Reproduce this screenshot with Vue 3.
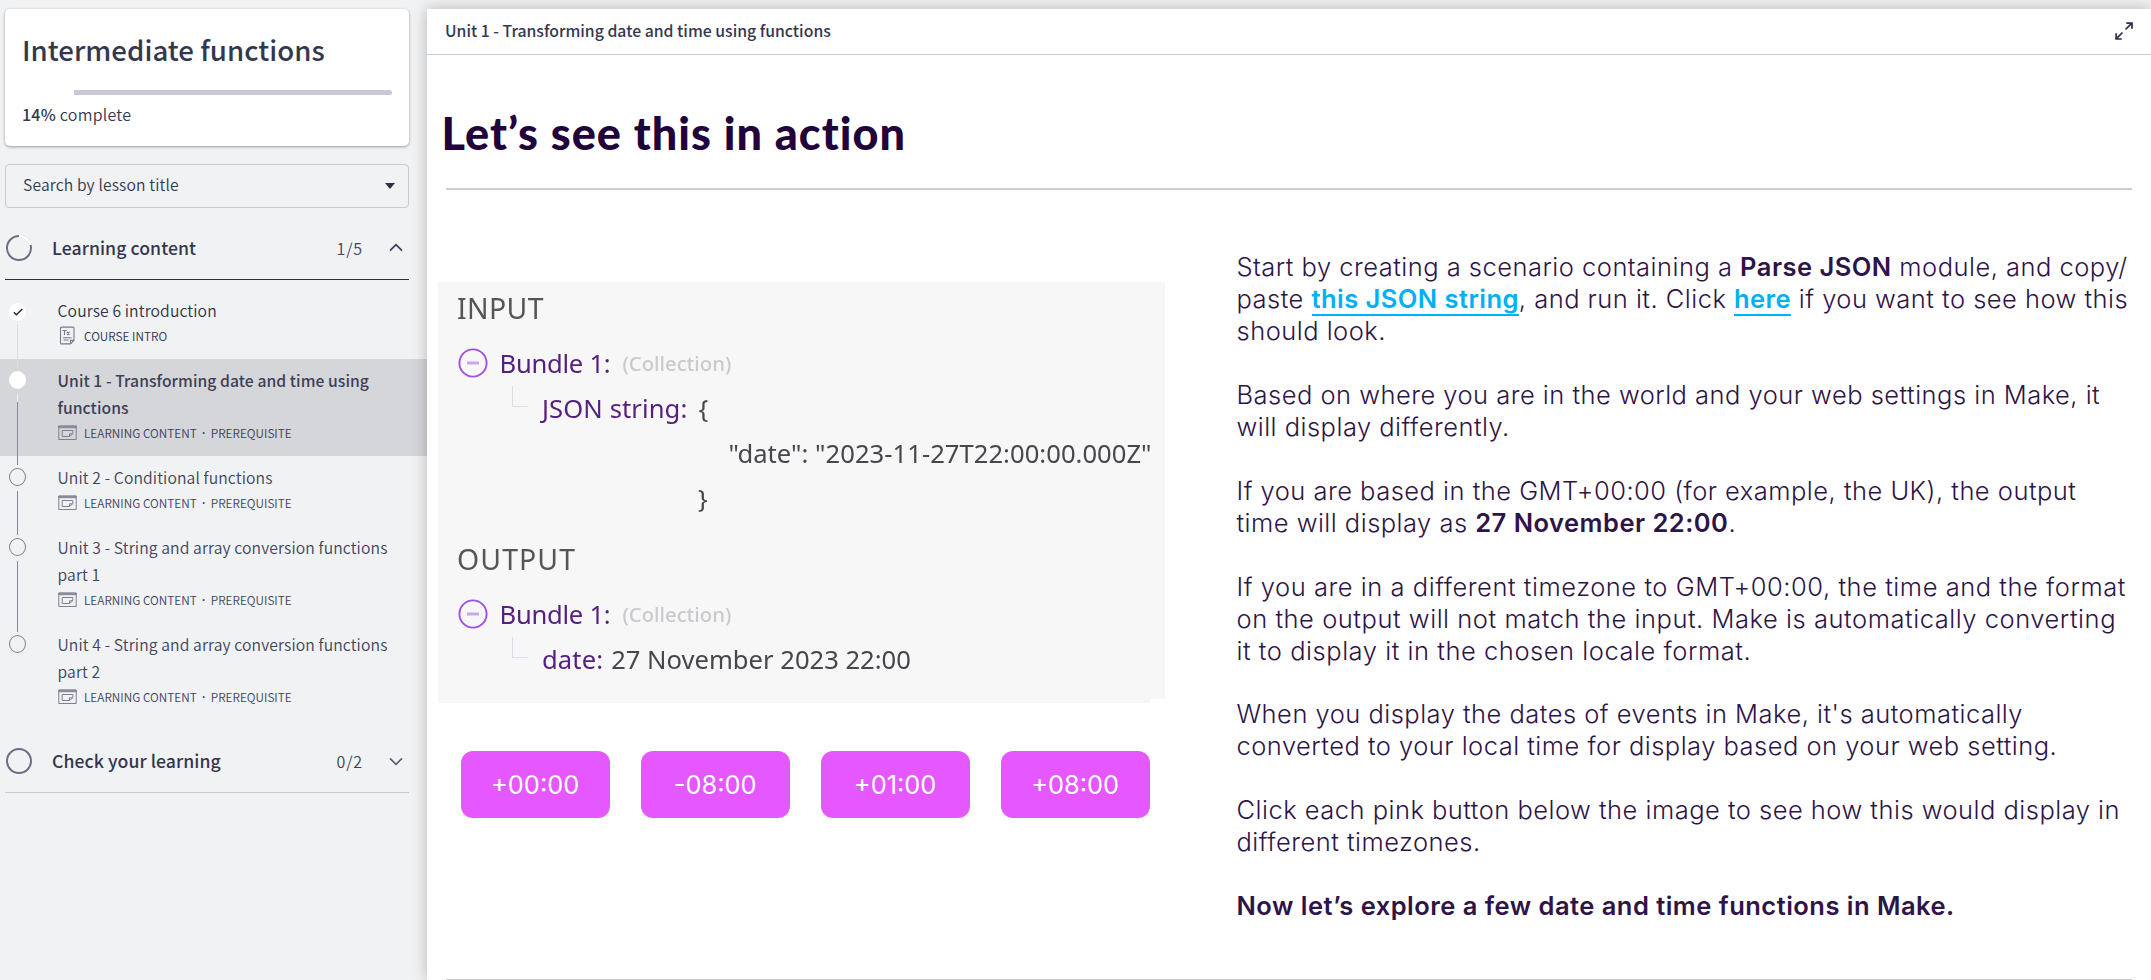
<script setup>
const lessons = [
  { lines: ['Course 6 introduction'], meta: ['COURSE INTRO'], state: 'done', icon: 'text' },
  { lines: ['Unit 1 - Transforming date and time using', 'functions'], meta: ['LEARNING CONTENT', 'PREREQUISITE'], state: 'current', icon: 'slide' },
  { lines: ['Unit 2 - Conditional functions'], meta: ['LEARNING CONTENT', 'PREREQUISITE'], state: 'open', icon: 'slide' },
  { lines: ['Unit 3 - String and array conversion functions', 'part 1'], meta: ['LEARNING CONTENT', 'PREREQUISITE'], state: 'open', icon: 'slide' },
  { lines: ['Unit 4 - String and array conversion functions', 'part 2'], meta: ['LEARNING CONTENT', 'PREREQUISITE'], state: 'open last', icon: 'slide' },
]
const offsets = ['+00:00', '-08:00', '+01:00', '+08:00']
</script>

<template>
  <div class="page">
    <aside class="sidebar">
      <section class="card">
        <h1>Intermediate functions</h1>
        <div class="progress"><div class="remaining"></div></div>
        <p class="percent"><b>14%</b> complete</p>
      </section>

      <div class="search">
        <span>Search by lesson title</span>
        <svg width="10" height="6" viewBox="0 0 10 6"><path d="M0 0h10L5 6z" fill="#2d3047" /></svg>
      </div>

      <div class="group dark">
        <svg class="ring" width="28" height="28" viewBox="0 0 28 28">
          <circle cx="14" cy="14" r="12" fill="none" stroke="#6b6e82" stroke-width="2" />
          <path d="M14 2A12 12 0 0 1 25.6 11" fill="none" stroke="#fff" stroke-width="2.4" />
        </svg>
        <span class="name">Learning content</span>
        <span class="count">1/5</span>
        <svg class="chev" width="14" height="9" viewBox="0 0 14 9"><path d="M1 7.7L7 1.6l6 6.100" fill="none" stroke="#3a3d54" stroke-width="1.7" /></svg>
      </div>

      <ul class="lessons">
        <li v-for="l in lessons" :key="l.lines[0]" :class="l.state">
          <div class="rail">
            <span class="dot">
              <svg v-if="l.state === 'done'" width="10" height="8" viewBox="0 0 10 8"><path d="M.8 4.200L3.400 6.700L9.300.9" fill="none" stroke="#22243a" stroke-width="1.4" /></svg>
            </span>
            <span class="line"></span>
          </div>
          <div class="info">
            <div v-for="t in l.lines" :key="t" class="title">{{ t }}</div>
            <div class="meta">
              <svg v-if="l.icon === 'text'" width="19" height="19" viewBox="0 0 19 19" fill="none" stroke="#777a8c" stroke-width="1.100">
                <path d="M12.500 17.900H3.500a1 1 0 0 1-1-1V2.100a1 1 0 0 1 1-1H15a1 1 0 0 1 1 1v12.300zM12.500 17.700v-3.300H16" />
                <path d="M4.500 4.500h4M6.500 4.500v4.500M9 5.800l2.500 3.200M11.500 5.800L9 9M5 11.700h8.500M5.500 14h5" />
              </svg>
              <svg v-else width="19" height="16" viewBox="0 0 19 16" fill="none" stroke="#7d8091">
                <path d="M.8 1.100h17.400v1.600H.8z" fill="#b9bbc5" />
                <path d="M.8 1.100h17.400v13.400H.8z" />
                <path d="M11.500 11.500H4.200V5.500h10.600v3.200zM11.500 11.500V8.800h3.200" />
              </svg>
              <span>{{ l.meta[0] }}</span>
              <template v-if="l.meta[1]"><span class="sep">·</span><span>{{ l.meta[1] }}</span></template>
            </div>
          </div>
        </li>
      </ul>

      <div class="group second">
        <svg class="ring" width="28" height="28" viewBox="0 0 28 28">
          <circle cx="14" cy="14" r="12" fill="none" stroke="#6b6e82" stroke-width="2" />
        </svg>
        <span class="name">Check your learning</span>
        <span class="count">0/2</span>
        <svg class="chev" width="14" height="9" viewBox="0 0 14 9"><path d="M1 1.300L7 7.400l6-6.100" fill="none" stroke="#5d6076" stroke-width="1.7" /></svg>
      </div>
    </aside>

    <main class="main">
      <header class="bar">
        <span>Unit 1 - Transforming date and time using functions</span>
        <svg width="18" height="18" viewBox="0 0 18 18" fill="none" stroke="#2d3047" stroke-width="1.700">
          <path d="M10.500 7.500L16.800 1.200M11.300 1.100H17V6.800M7.500 10.500L1.200 16.800M1.100 11.300V17H6.800" />
        </svg>
      </header>

      <h2>Let’s see this in action</h2>
      <hr />

      <div class="columns">
        <section class="demo">
          <div class="panel">
            <div class="soft">
              <div class="label">INPUT</div>
              <div class="row">
                <svg class="minus" width="30" height="30" viewBox="0 0 30 30" fill="none"><circle cx="15" cy="15" r="13.600" stroke="#a24fe6" stroke-width="1.900" /><path d="M9 15h12" stroke="#cba6ec" stroke-width="3" /></svg>
                <span class="key bundle">Bundle 1:</span><span class="type">(Collection)</span>
              </div>
              <div class="row child"><i class="elbow"></i><span class="key">JSON string:</span><span class="brace">{</span></div>
              <div class="row value">"date": "2023-11-27T22:00:00.000Z"</div>
              <div class="row close">}</div>
              <div class="label output">OUTPUT</div>
              <div class="row">
                <svg class="minus" width="30" height="30" viewBox="0 0 30 30" fill="none"><circle cx="15" cy="15" r="13.600" stroke="#a24fe6" stroke-width="1.900" /><path d="M9 15h12" stroke="#cba6ec" stroke-width="3" /></svg>
                <span class="key bundle">Bundle 1:</span><span class="type">(Collection)</span>
              </div>
              <div class="row child"><i class="elbow"></i><span class="key">date:</span><span class="date">27 November 2023 22:00</span></div>
            </div>
          </div>
          <div class="buttons">
            <button v-for="o in offsets" :key="o">{{ o }}</button>
          </div>
        </section>

        <section class="copy">
          <p>Start by creating a scenario containing a <b>Parse JSON</b> module, and copy/<br />paste <a>this JSON string</a>, and run it. Click <a>here</a> if you want to see how this<br />should look.</p>
          <p>Based on where you are in the world and your web settings in Make, it<br />will display differently.</p>
          <p>If you are based in the GMT+00:00 (for example, the UK), the output<br />time will display as <b>27 November 22:00</b>.</p>
          <p class="loose">If you are in a different timezone to GMT+00:00, the time and the format<br />on the output will not match the input. Make is automatically converting<br />it to display it in the chosen locale format.</p>
          <p>When you display the dates of events in Make, it's automatically<br />converted to your local time for display based on your web setting.</p>
          <p>Click each pink button below the image to see how this would display in<br />different timezones.</p>
          <p><b>Now let’s explore a few date and time functions in Make.</b></p>
        </section>
      </div>
      <hr class="end" />
    </main>
  </div>
</template>

<style>
body { margin: 0; overflow: hidden; }
</style>

<style scoped>
* { box-sizing: border-box; }
.page {
  display: flex;
  width: 2151px;
  height: 980px;
  overflow: hidden;
  background: #f1f2f4;
  color: #34374e;
  font-family: "Noto Sans CJK SC", "Noto Sans", sans-serif;
}
.sidebar { width: 427px; flex: none; padding-top: 9px; }
.card {
  width: 404px;
  height: 137px;
  margin-left: 5px;
  padding: 20px 17px 0 17px;
  border-radius: 5px;
  background: #fff;
  box-shadow: 0 1px 3px rgba(40, 50, 60, .45);
}
h1 { margin: 0; font-size: 27.6px; line-height: 40px; font-weight: 500; letter-spacing: .04px; white-space: nowrap; }
.progress { display: flex; justify-content: flex-end; margin-top: 21px; }
.remaining { width: 318px; height: 5px; border-radius: 0 3px 3px 0; background: #c7cad4; }
.percent { margin: 7px 0 0; font-size: 16px; font-weight: 350; line-height: 24px; letter-spacing: .25px; }
.percent b { font-weight: 500; }
.search {
  display: flex;
  align-items: center;
  justify-content: space-between;
  width: 404px;
  height: 44px;
  margin: 18px 0 0 5px;
  padding: 0 13px 0 17px;
  border: 1px solid #c7cad6;
  border-radius: 4px;
  font-size: 15.65px;
  font-weight: 350;
  letter-spacing: .15px;
  line-height: 20px;
}
.search span { margin-top: -2px; }
.group {
  display: flex;
  align-items: center;
  width: 404px;
  height: 63px;
  margin-left: 5px;
  border-bottom: 1px solid #c7cad6;
}
.group.dark { height: 64px; margin-top: 8px; margin-bottom: 9px; border-bottom-color: #2d3047; }
.ring { flex: none; margin: 0 19px 0 0; }
.name { flex: 1; font-size: 17.65px; font-weight: 500; line-height: 24px; letter-spacing: .06px; }
.count { font-size: 16px; font-weight: 350; line-height: 24px; letter-spacing: .9px; color: #3f4259; }
.chev { margin: 0 6px 0 26px; }
.second { margin-top: 10px; }
.lessons { margin: 0; padding: 0; list-style: none; }
.lessons li { display: flex; color: #41445c; }
.lessons .done { color: #2f3249; }
.lessons .current { background: #d5d6da; color: #3d4057; }
.rail { display: flex; flex-direction: column; align-items: center; width: 35px; margin-right: 22.500px; padding-top: 12px; }
.dot {
  display: flex;
  align-items: center;
  justify-content: center;
  width: 17px;
  height: 18px;
  flex: none;
  border: 1px solid #7d8091;
  border-radius: 50%;
}
.done .dot, .current .dot { border-color: #fff; background: #fff; }
.done .rail { padding-top: 14px; }
.line { width: 1.500px; flex: 1; margin: 5px 0 -9px; background: #85889a; z-index: 1; }
.done .line { margin-top: 3px; background: #dddee2; }
.current .line { background: linear-gradient(#eeeff1 8px, #85889a 8px); }
.last .line { visibility: hidden; }
.info { padding-top: 8px; }
.title { font-size: 15.7px; font-weight: 350; line-height: 27px; letter-spacing: .12px; white-space: nowrap; }
.current .title { font-weight: 500; letter-spacing: .06px; }
.meta { display: flex; align-items: center; height: 24px; margin: -1px 0 12px; font-size: 11.800px; font-weight: 350; letter-spacing: .02px; }
.meta svg { margin-right: 7.500px; margin-top: 1px; }
.sep { width: 14px; text-align: center; font-family: "Noto Sans", sans-serif; font-weight: 600; line-height: 24px; margin-top: 2px; }

.main {
  position: relative;
  flex: 1;
  margin-top: 9px;
  background: #fff;
  box-shadow: 0 0 14px rgba(0, 0, 0, .25);
}
.bar {
  display: flex;
  align-items: center;
  justify-content: space-between;
  height: 46px;
  padding: 0 18px 2px 18px;
  border-bottom: 1px solid #c7cad4;
  font-size: 15.8px;
  font-weight: 500;
}
h2 {
  margin: 48px 0 0 14.500px;
  font: 900 45px/60px Lato, sans-serif;
  letter-spacing: 1.040px;
  color: #22023a;
}
hr { width: 1686px; height: 2px; margin: 25px 0 0 19px; border: 0; background: #d2ccd0; }
.columns { display: flex; height: 789px; }
.demo { width: 799px; padding: 92px 0 0 11px; }
.panel {
  width: 727px;
  height: 421px;
  background: #f7f7f7;
  clip-path: polygon(0 0, 100% 0, 100% 417px, 712px 417px, 712px 100%, 0 100%);
}
.soft { filter: blur(.4px); font: 25.6px/45px "Noto Sans", sans-serif; color: #45474c; }
.label { height: 59px; padding-left: 19px; font-size: 28.4px; line-height: 52px; letter-spacing: .4px; color: #555; }
.label.output { height: 71px; line-height: 77px; padding-left: 19px; letter-spacing: 1.100px; }
.row { display: flex; align-items: center; height: 45px; white-space: pre; }
.minus { margin: -2px 11.500px 0 20px; }
.key { color: #562080; letter-spacing: .1px; }
.bundle { letter-spacing: -.25px; }
.type { margin-left: 12px; font-size: 20.3px; font-weight: 500; color: #c9cacd; }
.elbow { width: 16px; height: 21px; margin: -24px 14px 0 74px; border: solid #dcdce4; border-width: 0 0 1px 1px; }
.brace { margin-left: 11px; }
.value { padding-left: 290.500px; letter-spacing: .03px; }
.close { padding-left: 260px; }
.date { margin-left: 8px; }
.buttons { display: flex; gap: 30.700px; margin: 48px 0 0 23px; }
button {
  width: 149.300px;
  height: 67px;
  padding: 0 1px 0 0;
  border: 0;
  border-radius: 12px;
  background: #e557ff;
  color: #fff;
  font: 25.4px/66px Inter, sans-serif;
}
.copy {
  padding: 60.600px 0 0 10.500px;
  font: 300 25.500px/32px Inter, sans-serif;
  letter-spacing: .48px;
  color: #2e1447;
  white-space: nowrap;
}
.copy p { margin: 0 0 32px; }
.copy .loose { margin-bottom: 31px; letter-spacing: .54px; }
.copy b { font-weight: 600; }
.copy a { font-weight: 600; letter-spacing: .45px; color: #00b0f5; border-bottom: 2px solid #00b0f5; }
hr.end { margin-top: 0; background: #c9c9c9; }
</style>
